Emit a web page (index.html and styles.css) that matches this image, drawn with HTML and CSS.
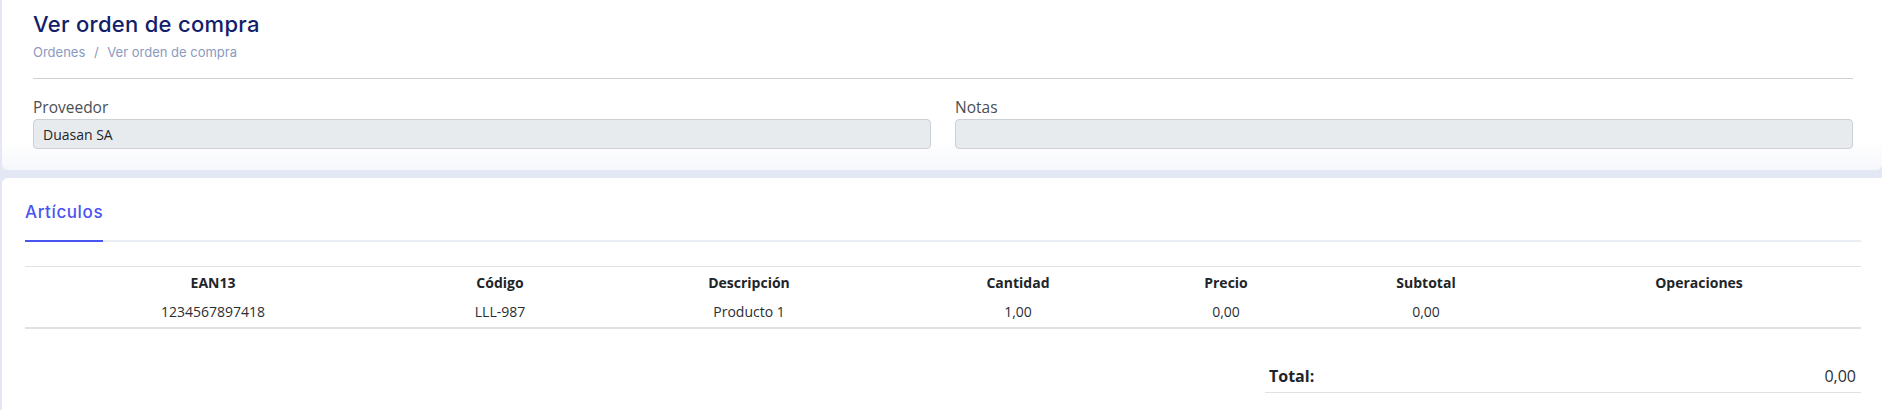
FILE: index.html
```html
<!DOCTYPE html>
<html lang="es">
<head>
  <meta charset="UTF-8">
  <meta name="viewport" content="width=device-width, initial-scale=1.0">
  <title>Ver orden de compra</title>
  <link rel="stylesheet" href="styles.css">
</head>
<body>
  <div class="card card-header">
    <h1 class="page-title">Ver orden de compra</h1>
    <div class="breadcrumb">
      <a href="#">Ordenes</a>
      <span class="sep">/</span>
      <span>Ver orden de compra</span>
    </div>
    <hr class="divider">
    <div class="form-row">
      <div class="form-group">
        <label for="proveedor">Proveedor</label>
        <input type="text" id="proveedor" value="Duasan SA" disabled>
      </div>
      <div class="form-group">
        <label for="notas">Notas</label>
        <input type="text" id="notas" value="" disabled>
      </div>
    </div>
  </div>

  <div class="card card-body">
    <ul class="tabs">
      <li class="tab active">Artículos</li>
    </ul>

    <table class="items">
      <colgroup>
        <col class="c-ean">
        <col class="c-code">
        <col class="c-desc">
        <col class="c-qty">
        <col class="c-price">
        <col class="c-sub">
        <col class="c-ops">
      </colgroup>
      <thead>
        <tr>
          <th>EAN13</th>
          <th>Código</th>
          <th>Descripción</th>
          <th>Cantidad</th>
          <th>Precio</th>
          <th>Subtotal</th>
          <th>Operaciones</th>
        </tr>
      </thead>
      <tbody>
        <tr>
          <td>1234567897418</td>
          <td>LLL-987</td>
          <td>Producto 1</td>
          <td>1,00</td>
          <td>0,00</td>
          <td>0,00</td>
          <td></td>
        </tr>
      </tbody>
    </table>

    <div class="totals-wrap">
      <table class="totals">
        <tr>
          <th>Total:</th>
          <td>0,00</td>
        </tr>
      </table>
    </div>
  </div>
</body>
</html>
```

FILE: styles.css
```css
body {
  margin: 0;
  background-color: #e3e8f4;
  font-family: "Open Sans", "Liberation Sans", sans-serif;
  color: #212529;
}
.card {
  background-color: #fff;
  margin-left: 2px;
}
.card-header {
  padding: 10px 29px 21px 31px;
  border-radius: 0 0 6px 6px;
  background: linear-gradient(#fff 82%, #f6f7fb);
}
.card-body {
  box-sizing: border-box;
  min-height: calc(100vh - 178px);
  margin-top: 8px;
  padding: 22px 21px 0 23px;
  border-radius: 6px 0 0 0;
}
.page-title {
  margin: 0;
  font-family: Inter, "Noto Sans", sans-serif;
  font-weight: 500;
  font-size: 22px;
  line-height: 28px;
  color: #122069;
  letter-spacing: 0.3px;
}
.breadcrumb {
  margin-top: 4px;
  font-family: Inter, "Noto Sans", sans-serif;
  font-size: 13px;
  line-height: 20px;
  color: #8a9ac0;
}
.breadcrumb a {
  color: #8a9ac0;
  text-decoration: none;
}
.breadcrumb .sep {
  margin: 0 5px;
}
.divider {
  margin: 16px 0 0;
  border: none;
  border-top: 1px solid #cfd1d4;
}
.form-row {
  display: grid;
  grid-template-columns: 1fr 1fr;
  gap: 24px;
  margin-top: 17px;
}
.form-group label {
  display: block;
  font-size: 15.5px;
  line-height: 22px;
  color: #4a4f55;
  margin-bottom: 1px;
}
.form-group input {
  display: block;
  width: 100%;
  box-sizing: border-box;
  height: 30px;
  padding: 0 9px;
  font-family: "Open Sans", "Liberation Sans", sans-serif;
  font-size: 14px;
  color: #212529;
  background-color: #e8ebee;
  border: 1px solid #cdd0d4;
  border-radius: 4px;
}
.tabs {
  list-style: none;
  margin: 0;
  padding: 0;
  display: flex;
  border-bottom: 2px solid #eaedf3;
}
.tab {
  font-family: Inter, "Noto Sans", sans-serif;
  font-weight: 500;
  font-size: 17px;
  line-height: 24px;
  letter-spacing: 0.6px;
  color: #4a55ef;
  padding-bottom: 16px;
  margin-bottom: -2px;
}
.tab.active {
  border-bottom: 2px solid #4a55ef;
}
.items {
  width: 100%;
  margin-top: 24px;
  border-collapse: collapse;
  table-layout: fixed;
  font-size: 14px;
}
.c-ean { width: 376px; }
.c-code { width: 198px; }
.c-desc { width: 300px; }
.c-qty { width: 238px; }
.c-price { width: 178px; }
.c-sub { width: 222px; }
.items thead tr {
  border-top: 1px solid #dee2e6;
}
.items th {
  font-weight: 700;
  line-height: 20px;
  padding: 6px 0 3px;
  text-align: center;
}
.items td {
  line-height: 20px;
  padding: 6px 0 5px;
  text-align: center;
  color: #2b2f33;
}
.items tbody tr {
  border-bottom: 2px solid #dee2e6;
}
.totals-wrap {
  display: flex;
  justify-content: flex-end;
  margin-top: 31px;
}
.totals {
  width: 596px;
  border-collapse: collapse;
  font-size: 16px;
}
.totals tr {
  border-bottom: 1px solid #dee2e6;
}
.totals th {
  text-align: left;
  font-weight: 700;
  line-height: 24px;
  padding: 4px 0 4px 4px;
}
.totals td {
  text-align: right;
  line-height: 24px;
  padding: 4px 5px 4px 0;
  color: #2b2f33;
}
```
